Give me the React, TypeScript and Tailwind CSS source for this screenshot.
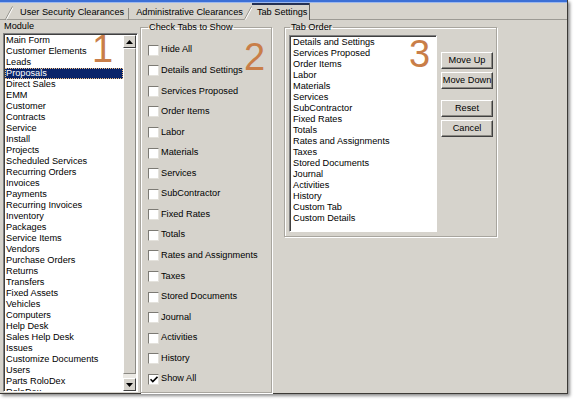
import React from "react";

const modules = [
  "Main Form",
  "Customer Elements",
  "Leads",
  "Proposals",
  "Direct Sales",
  "EMM",
  "Customer",
  "Contracts",
  "Service",
  "Install",
  "Projects",
  "Scheduled Services",
  "Recurring Orders",
  "Invoices",
  "Payments",
  "Recurring Invoices",
  "Inventory",
  "Packages",
  "Service Items",
  "Vendors",
  "Purchase Orders",
  "Returns",
  "Transfers",
  "Fixed Assets",
  "Vehicles",
  "Computers",
  "Help Desk",
  "Sales Help Desk",
  "Issues",
  "Customize Documents",
  "Users",
  "Parts RoloDex",
  "RoloDex",
];

const checkTabs = [
  "Hide All",
  "Details and Settings",
  "Services Proposed",
  "Order Items",
  "Labor",
  "Materials",
  "Services",
  "SubContractor",
  "Fixed Rates",
  "Totals",
  "Rates and Assignments",
  "Taxes",
  "Stored Documents",
  "Journal",
  "Activities",
  "History",
  "Show All",
];

const tabOrder = [
  "Details and Settings",
  "Services Proposed",
  "Order Items",
  "Labor",
  "Materials",
  "Services",
  "SubContractor",
  "Fixed Rates",
  "Totals",
  "Rates and Assignments",
  "Taxes",
  "Stored Documents",
  "Journal",
  "Activities",
  "History",
  "Custom Tab",
  "Custom Details",
];

const Slant = () => (
  <svg width="8" height="17" viewBox="0 0 8 17" className="shrink-0">
    <line x1="0.5" y1="16.5" x2="7.5" y2="3.5" stroke="#8c8a84" strokeWidth="1" />
    <line x1="1.5" y1="16.5" x2="8" y2="4.5" stroke="#ffffff" strokeWidth="1" />
  </svg>
);

const Arrow = ({ down }: { down?: boolean }) => (
  <svg width="7" height="4" viewBox="0 0 7 4">
    <path d={down ? "M0 0H7L3.5 4Z" : "M0 4H7L3.5 0Z"} fill="#000" />
  </svg>
);

const WinButton: React.FC<{ label: string; className?: string }> = ({ label, className = "" }) => (
  <button
    className={
      "w-[52px] h-[17px] flex items-center justify-center bg-[#d6d3cc] border border-t-white border-l-white border-r-[#404040] border-b-[#404040] shadow-[inset_-1px_-1px_0_#8c8a84] text-[9.2px] leading-none text-black " +
      className
    }
  >
    {label}
  </button>
);

const CheckBox = ({ checked }: { checked?: boolean }) => (
  <span className="w-[11px] h-[11px] shrink-0 bg-white border border-t-[#7c7a74] border-l-[#7c7a74] border-r-[#e4e2dc] border-b-[#e4e2dc] flex items-center justify-center">
    {checked && (
      <svg width="8" height="7" viewBox="0 0 8 7">
        <path d="M0.5 3.2L2.8 5.6L7.5 0.8" stroke="#000" strokeWidth="1.6" fill="none" />
      </svg>
    )}
  </span>
);

export default function App() {
  return (
    <div
      className="w-[578px] h-[403px] bg-white overflow-hidden text-black"
      style={{ fontFamily: '"Liberation Sans", Arial, sans-serif' }}
    >
      <div className="w-[568px] h-[394px] bg-[#d6d3cc] border-r border-b border-[#3c3a36] shadow-[2px_2px_3px_rgba(0,0,0,0.45)] flex flex-col">
        {/* title strip */}
        <div className="h-[3px] bg-[#3b6fd6] border-b border-[#9cb8ee]" />

        {/* tab strip */}
        <div className="h-[17px] flex items-end text-[9.2px] leading-none">
          <div className="w-[5px] h-full border-b border-[#9c9a94]" />
          <div className="h-full border-b border-[#9c9a94] flex">
            <Slant />
          </div>
          <div className="h-full flex items-center pt-[3px] pl-[7px] pr-[4px] border-b border-[#9c9a94]">
            User Security Clearances
          </div>
          <div className="w-px h-[12px] bg-[#8c8a84]" />
          <div className="h-full flex items-center pt-[3px] pl-[7px] pr-[1px] border-b border-[#9c9a94]">
            Administrative Clearances
          </div>
          <div className="h-full flex">
            <Slant />
          </div>
          <div className="h-full flex items-center pt-[1px] pl-[5px] pr-[2px] border-t-2 border-[#243052]">
            Tab Settings
          </div>
          <div className="w-px h-full bg-[#5c5a56]" />
          <div className="flex-1 h-full border-b border-[#9c9a94]" />
        </div>

        {/* content */}
        <div className="flex flex-1 pl-[3px] text-[9.2px]">
          {/* Module column */}
          <div className="w-[135px] flex flex-col">
            <div className="h-[13px] leading-[13px] pl-[1px]">Module</div>
            <div className="relative h-[359px] bg-white border border-t-[#808080] border-l-[#808080] border-r-white border-b-white shadow-[inset_1px_1px_0_#404040] flex">
              <div className="flex-1 overflow-hidden pl-[1px] pt-px">
                {modules.map((m) => (
                  <div
                    key={m}
                    className={
                      "h-[11px] leading-[11px] pl-[1px] whitespace-nowrap " +
                      (m === "Proposals"
                        ? "bg-[#0a246a] text-white outline-1 outline-dotted outline-[#f0c080] -outline-offset-1"
                        : "")
                    }
                  >
                    {m}
                  </div>
                ))}
              </div>
              <div className="w-[13px] flex flex-col bg-[#ebe9e4] mt-[1px] mr-px">
                <div className="h-[13px] shrink-0 bg-[#d6d3cc] border border-t-white border-l-white border-r-[#404040] border-b-[#404040] flex items-center justify-center">
                  <Arrow />
                </div>
                <div className="flex-1 mb-[4px] bg-[#d6d3cc] border border-t-white border-l-white border-r-[#8c8a84] border-b-[#8c8a84]" />
                <div className="h-[13px] shrink-0 bg-[#d6d3cc] border border-t-white border-l-white border-r-[#404040] border-b-[#404040] flex items-center justify-center">
                  <Arrow down />
                </div>
              </div>
              <span className="absolute left-[88px] top-[-4px] text-[38px] leading-none text-[#c97e48] pointer-events-none">
                1
              </span>
            </div>
          </div>

          {/* Check Tabs group */}
          <fieldset className="relative ml-[2px] mt-[2px] w-[132px] h-[371px] border border-[#a8a59e] shadow-[inset_1px_1px_0_#fff,1px_1px_0_#fff] px-[7px]">
            <legend className="px-[1px] leading-[11px]">Check Tabs to Show</legend>
            <div className="pt-[7px] flex flex-col">
              {checkTabs.map((c) => (
                <div key={c} className="h-[20.5625px] flex items-center gap-[2px] whitespace-nowrap">
                  <CheckBox checked={c === "Show All"} />
                  <span>{c}</span>
                </div>
              ))}
            </div>
            <span className="absolute left-[103px] top-[5px] text-[38px] leading-none text-[#c97e48] pointer-events-none">
              2
            </span>
          </fieldset>

          {/* Tab Order group */}
          <fieldset className="relative ml-[12px] mt-[2px] w-[213px] h-[215px] border border-[#a8a59e] shadow-[inset_1px_1px_0_#fff,1px_1px_0_#fff] pl-[4px] pr-[3px]">
            <legend className="ml-[1px] px-[1px] leading-[11px]">Tab Order</legend>
            <div className="flex gap-[4px] pt-[2px]">
              <div className="relative w-[148px] h-[197px] bg-white border border-t-[#808080] border-l-[#808080] border-r-white border-b-white shadow-[inset_1px_1px_0_#404040] pt-[1px] pl-[3px]">
                {tabOrder.map((t) => (
                  <div key={t} className="h-[11px] leading-[11px] whitespace-nowrap">
                    {t}
                  </div>
                ))}
                <span className="absolute left-[119px] top-[-1px] text-[38px] leading-none text-[#c97e48] pointer-events-none">
                  3
                </span>
              </div>
              <div className="flex flex-col pt-[17px]">
                <WinButton label="Move Up" />
                <WinButton label="Move Down" className="mt-[3px]" />
                <WinButton label="Reset" className="mt-[11px]" />
                <WinButton label="Cancel" className="mt-[3px]" />
              </div>
            </div>
          </fieldset>
        </div>
      </div>
    </div>
  );
}
